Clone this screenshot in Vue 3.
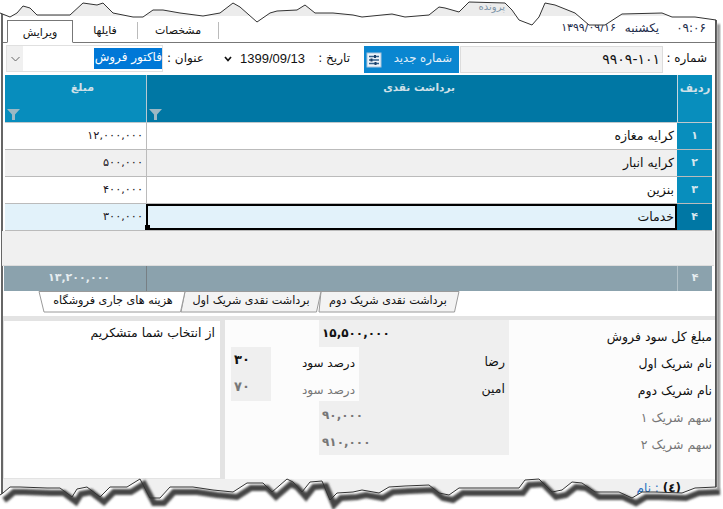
<script setup>
const rows = [
  { n: '۱', name: 'کرایه مغازه', amount: '۱۲,۰۰۰,۰۰۰' },
  { n: '۲', name: 'کرایه انبار', amount: '۵۰۰,۰۰۰' },
  { n: '۳', name: 'بنزین', amount: '۴۰۰,۰۰۰' },
  { n: '۴', name: 'خدمات', amount: '۳۰۰,۰۰۰', active: true },
]
const top = '0,13 10,17 17,13 23,6 30,8 37,15 70,15 83,3 97,5 103,3 113,13 133,17 143,17 153,10 163,10 180,13 203,16 220,13 233,3 240,7 257,22 270,13 277,11 297,10 305,5 315,13 333,13 353,15 362,17 392,14 405,17 429,15 439,7 445,8 459,12 469,2 505,3 512,10 519,20 532,25 539,17 545,3 555,5 575,13 589,25 605,25 622,14 662,13 672,17 695,17 716,20'
const bottom = '0,495 3,493 10,487 20,487 47,488 60,488 72,497 77,489 87,487 100,497 110,487 127,487 140,479 150,498 160,498 170,487 193,487 213,490 233,492 247,483 263,483 272,492 287,479 293,482 302,492 310,482 322,481 330,500 337,493 353,492 362,490 379,493 389,487 405,486 429,485 439,493 449,495 459,488 519,488 525,480 539,479 552,492 562,490 572,482 582,483 595,492 619,492 632,498 642,492 655,492 682,493 695,488 716,487'
</script>

<template>
  <div class="page">
    <div class="window">
      <div class="titlebar"><span class="title">پرونده</span></div>
      <div class="tabbar">
        <div class="clock">
          <span class="time">۰۹:۰۶</span>
          <span class="day">یکشنبه</span>
          <span>۱۳۹۹/۰۹/۱۶</span>
        </div>
        <div class="maintabs">
          <span class="maintab active">ویرایش</span>
          <span class="maintab">فایلها</span>
          <span class="maintab">مشخصات</span>
        </div>
      </div>

      <div class="formrow">
        <span class="lbl num-lbl">شماره :</span>
        <div class="numfield">۹۹۰۹-۱۰۱</div>
        <button class="newbtn">
          <span class="newtxt">شماره جدید</span>
          <svg width="16" height="16" viewBox="0 0 16 16">
            <rect x="1" y="1" width="14" height="14" fill="#eef4fa" stroke="#a9c4dc" />
            <path d="M3 4.500h10M3 8h10M3 11.500h10" stroke="#34608c" stroke-width="1.400" />
            <path d="M9 3v3M5.500 6.500v3M9.500 10v3" stroke="#1d3f66" stroke-width="2" />
          </svg>
        </button>
        <span class="lbl date-lbl">تاریخ :</span>
        <span class="datev">1399/09/13</span>
        <svg class="datearrow" width="8" height="6" viewBox="0 0 8 6"><path d="M1 1l3 3.500L7 1" fill="none" stroke="#111" stroke-width="1.700" /></svg>
        <span class="lbl title-lbl">عنوان :</span>
        <div class="combo">
          <span class="selected">فاکتور فروش</span>
          <span class="caret">
            <svg width="9" height="6" viewBox="0 0 9 6"><path d="M.5 1l4 4 4-4" fill="none" stroke="#666" /></svg>
          </span>
        </div>
      </div>

      <div class="grid">
        <div class="ghead">
          <div class="hc radif">ردیف</div>
          <div class="hc desc">
            برداشت نقدی
            <svg class="funnel" width="13" height="11" viewBox="0 0 13 11"><path d="M0 0h13L8 5.500V11H5V5.500z" fill="#9cb8c4" /></svg>
          </div>
          <div class="hc amount">
            مبلغ
            <svg class="funnel" width="13" height="11" viewBox="0 0 13 11"><path d="M0 0h13L8 5.500V11H5V5.500z" fill="#9cb8c4" /></svg>
          </div>
        </div>
        <div v-for="(r, i) in rows" :key="r.n" class="grow" :class="{ alt: i === 1, on: r.active }">
          <div class="c-n">{{ r.n }}</div>
          <div class="c-d">{{ r.name }}</div>
          <div class="c-a">{{ r.amount }}</div>
        </div>
        <div class="gempty"></div>
        <div class="gfoot">
          <div class="f-n">۴</div>
          <div class="f-d"></div>
          <div class="f-a">۱۳,۲۰۰,۰۰۰</div>
        </div>
      </div>

      <div class="sheetbar">
        <svg class="sheetshape" width="711" height="22" viewBox="0 0 711 22">
          <path d="M315 .5h138l-4.500 20.500H313z" fill="#f3f3f3" stroke="#9a9a9a" />
          <path d="M179 .5h136l-4.500 20.500H175z" fill="#f3f3f3" stroke="#9a9a9a" />
          <path d="M33 .5h146l-4.500 20.500H38z" fill="#fff" stroke="#9a9a9a" />
        </svg>
        <span class="sheet s3">برداشت نقدی شریک دوم</span>
        <span class="sheet s2">برداشت نقدی شریک اول</span>
        <span class="sheet s1">هزینه های جاری فروشگاه</span>
      </div>

      <div class="lower">
        <div class="summary">
          <div class="lab l1">مبلغ کل سود فروش</div>
          <div class="val big">۱۵,۵۰۰,۰۰۰</div>

          <div class="lab l2">نام شریک اول</div>
          <div class="nm n2">رضا</div>
          <div class="pl p2">درصد سود</div>
          <div class="pv v2">۳۰</div>

          <div class="lab l3">نام شریک دوم</div>
          <div class="nm n3">امین</div>
          <div class="pl p3 dim">درصد سود</div>
          <div class="pv v3 dim">۷۰</div>

          <div class="lab l4 dim">سهم شریک ۱</div>
          <div class="val v4 dim">۹۰,۰۰۰</div>
          <div class="lab l5 dim">سهم شریک ۲</div>
          <div class="val v5 dim">۹۱۰,۰۰۰</div>
        </div>
        <div class="note">از انتخاب شما متشکریم</div>
      </div>

      <div class="status"><b>(٤)</b> : نام</div>
    </div>

    <svg class="torn" width="723" height="509" viewBox="0 0 723 509">
      <defs>
        <filter id="blur" x="-5%" y="-50%" width="110%" height="200%"><feGaussianBlur stdDeviation="1.300" /></filter>
      </defs>
      <polygon :points="'0,0 ' + top + ' 723,20 723,0'" fill="#fff" />
      <polyline :points="top" fill="none" stroke="#333" stroke-width="1" />
      <polygon :points="bottom + ' 723,487 723,509 0,509'" fill="#fff" />
      <polyline :points="bottom" fill="none" stroke="#444" stroke-width="6" filter="url(#blur)" transform="translate(4 5)" />
      <polyline :points="bottom" fill="none" stroke="#333" stroke-width="1" />
      <rect x="717" y="24" width="3" height="466" fill="#8a8a8a" filter="url(#blur)" />
    </svg>
  </div>
</template>

<style scoped>
.page {
  position: relative;
  width: 723px;
  height: 509px;
  overflow: hidden;
  background: #fff;
  font-family: "DejaVu Sans", sans-serif;
  font-size: 11px;
  color: #111;
}
.window {
  box-sizing: border-box;
  width: 716px;
  height: 509px;
  margin-left: 1px;
  border-left: 2px solid #666;
  border-right: 2px solid #555;
  display: flex;
  flex-direction: column;
  background: #fff;
}
.titlebar {
  height: 16px;
  background: #ececec;
  direction: rtl;
  flex: none;
}
.title {
  display: block;
  margin-right: 210px;
  width: 40px;
  font-size: 10px;
  color: #7e95a8;
  line-height: 14px;
}
.tabbar {
  box-sizing: border-box;
  height: 27px;
  flex: none;
  display: flex;
  flex-direction: row-reverse;
  justify-content: space-between;
  border-bottom: 1px solid #777;
  direction: rtl;
}
.clock {
  order: 2;
  display: flex;
  gap: 17px;
  padding: 5px 9px 0 0;
  font-size: 11px;
  line-height: 14px;
  direction: rtl;
  color: #1c2b4a;
}
.time { font-size: 12px; }
.day { font-size: 12px; margin-left: -8px; }
.maintabs {
  order: 1;
  display: flex;
  flex-direction: row;
  direction: ltr;
  padding: 4px 0 0 4px;
  align-items: flex-end;
}
.maintab {
  box-sizing: border-box;
  width: 65px;
  height: 17px;
  margin-bottom: 3px;
  text-align: center;
  line-height: 18px;
  direction: rtl;
  border-right: 1px solid #bbb;
}
.maintab:nth-child(3) { width: 81px; }
.maintab.active {
  width: 66px;
  height: 23px;
  margin-bottom: -1px;
  line-height: 23px;
  background: #fff;
  border: 1px solid #777;
  border-bottom: 1px solid #fff;
}
.formrow {
  flex: none;
  height: 32px;
  display: flex;
  direction: rtl;
  align-items: center;
  box-sizing: border-box;
  padding: 2px 0 1px;
}
.lbl { white-space: nowrap; font-size: 12px; line-height: 26px; margin-top: -3px; }
.num-lbl { width: 52px; box-sizing: border-box; padding-right: 8px; }
.numfield {
  box-sizing: border-box;
  width: 203px;
  height: 27px;
  background: #f3f3f3;
  border: 1px solid #dcdcdc;
  font-size: 14px;
  line-height: 24px;
  padding-right: 2px;
}
.newbtn {
  box-sizing: border-box;
  width: 95px;
  height: 27px;
  margin-right: 1px;
  background: #0a86d0;
  border: 0;
  color: #e4eff8;
  font: inherit;
  font-size: 11.700px;
  display: flex;
  align-items: center;
  justify-content: space-between;
  padding: 0 7px 0 2px;
  direction: rtl;
}
.newtxt { margin-top: -3px; }
.date-lbl { width: 45px; margin-right: 14px; box-sizing: border-box; }
.datev {
  width: 65px;
  font-family: "Liberation Sans", sans-serif;
  font-size: 13px;
  direction: ltr;
  text-align: center;
  margin-top: -3px;
}
.datearrow { margin-right: 8px; margin-left: 20px; flex: none; margin-top: -1px; }
.title-lbl { width: 36px; }
.combo {
  box-sizing: border-box;
  width: 157px;
  height: 27px;
  margin-right: 5px;
  margin-top: -2px;
  border: 1px solid #e0e0e0;
  display: flex;
  align-items: center;
  justify-content: space-between;
}
.selected {
  background: #0078d7;
  color: #fff;
  height: 21px;
  width: 68px;
  line-height: 18px;
  font-size: 12px;
  white-space: nowrap;
  overflow: hidden;
  text-align: right;
}
.caret {
  width: 16px;
  height: 25px;
  background: #f0f0f0;
  display: flex;
  align-items: center;
  justify-content: center;
}
.grid {
  flex: none;
  width: 707px;
  margin-left: 2px;
  direction: rtl;
}
.ghead {
  display: grid;
  grid-template-columns: 35px 531px 141px;
  height: 48px;
  color: #cfe0e8;
  font-weight: bold;
  text-align: center;
  border-bottom: 1px solid #c0c8cc;
  box-sizing: border-box;
}
.hc { position: relative; padding-top: 6px; box-sizing: border-box; }
.radif { background: #088ebd; border-left: 1px solid #c6d6de; font-size: 11.500px; }
.desc { background: #0077a4; padding-left: 14px; border-left: 1px solid #b7c9d2; font-size: 10.500px; }
.amount { background: #078dbd; padding-left: 14px; }
.funnel { position: absolute; left: 2px; bottom: 2px; }
.grow {
  display: grid;
  grid-template-columns: 35px 531px 141px;
  height: 27px;
  box-sizing: border-box;
  border-bottom: 1px solid #bbb;
}
.alt { background: #f0f0f0; }
.on { background: #e2f2fa; }
.c-n {
  background: #088ebd;
  color: #d5e6ee;
  text-align: center;
  line-height: 26px;
  font-weight: bold;
}
.on .c-n { background: #0077a4; }
.c-d {
  padding-right: 3px;
  line-height: 25px;
  font-size: 12.500px;
  border-left: 1px solid #bbb;
}
.on .c-d {
  border: 2px solid #000;
  height: 26px;
  box-sizing: border-box;
  line-height: 21px;
  padding-right: 1px;
  position: relative;
}
.on .c-d::after {
  content: "";
  position: absolute;
  left: -3px;
  bottom: -2px;
  width: 5px;
  height: 5px;
  background: #000;
}
.c-a {
  padding-right: 3px;
  text-align: right;
  line-height: 25px;
  font-size: 11.300px;
  color: #1a1420;
}
.gempty {
  height: 35px;
  background: #f0f0f0;
  border-bottom: 1px solid #ddd;
  box-sizing: border-box;
  margin-left: -3px;
  margin-right: -2px;
}
.gfoot {
  display: grid;
  grid-template-columns: 35px 531px 141px;
  height: 25px;
  background: #8ba2ad;
  color: #e6edf0;
  font-weight: bold;
  line-height: 24px;
  margin-left: -1px;
  width: 708px;
}
.f-n { text-align: center; border-left: 1px solid #b3c2c9; }
.f-d { border-left: 1px solid #777f84; }
.f-a { text-align: left; padding-left: 43px; font-size: 11px; }
.sheetbar {
  position: relative;
  height: 25px;
  flex: none;
  direction: rtl;
  display: flex;
  box-sizing: border-box;
}
.sheetshape { position: absolute; left: 3px; top: 0; }
.sheet {
  position: relative;
  height: 21px;
  line-height: 20px;
  font-size: 11.200px;
  white-space: nowrap;
  text-align: center;
}
.s3 { margin-right: 258px; width: 138px; }
.s2 { width: 136px; }
.s1 { width: 140px; }
.lower {
  flex: none;
  height: 163px;
  background: #e3e3e3;
  display: grid;
  grid-template-columns: 490px 1fr;
  column-gap: 5px;
  padding-top: 4px;
  box-sizing: border-box;
  direction: rtl;
}
.note {
  background: #fff;
  margin: 1px 0;
  padding: 4px 5px;
  font-size: 12.500px;
  width: 216px;
  box-sizing: border-box;
}
.summary {
  direction: ltr;
  background: #fcfcfc;
  display: grid;
  grid-template-columns: 6px 40px 48px 40px 150px 206px;
  grid-template-rows: repeat(5, 27px);
  align-content: start;
}
.lab {
  grid-column: 6;
  direction: rtl;
  padding-right: 3px;
  line-height: 33px;
  font-size: 12.500px;
  white-space: nowrap;
  height: 27px;
}
.l1 { grid-row: 1; }
.l2 { grid-row: 2; }
.l3 { grid-row: 3; }
.l4 { grid-row: 4; }
.l5 { grid-row: 5; }
.val {
  grid-column: 4 / 6;
  background: #efefef;
  font-weight: bold;
  font-size: 12px;
  padding-left: 3px;
  line-height: 28px;
}
.big { grid-row: 1; line-height: 27px; color: #111; }
.v4 { grid-row: 4; }
.v5 { grid-row: 5; }
.nm {
  grid-column: 5;
  background: #efefef;
  direction: rtl;
  padding-right: 4px;
  line-height: 29px;
  font-size: 12.500px;
  height: 27px;
}
.n2 { grid-row: 2; }
.n3 { grid-row: 3; }
.pl {
  grid-column: 3 / 5;
  direction: rtl;
  padding-right: 4px;
  line-height: 33px;
  font-size: 12px;
  height: 27px;
}
.p2 { grid-row: 2; }
.p3 { grid-row: 3; }
.pv {
  grid-column: 2;
  background: #efefef;
  font-weight: bold;
  font-size: 13px;
  padding-left: 3px;
  line-height: 26px;
}
.v2 { grid-row: 2; }
.v3 { grid-row: 3; }
.dim { color: #777; }
.status {
  flex: 1;
  background: #f0f0f0;
  direction: rtl;
  padding: 2px 34px 0 0;
  font-size: 12px;
  color: #2a6fbf;
}
.status b { color: #111; }
.torn { position: absolute; left: 0; top: 0; pointer-events: none; }
</style>
